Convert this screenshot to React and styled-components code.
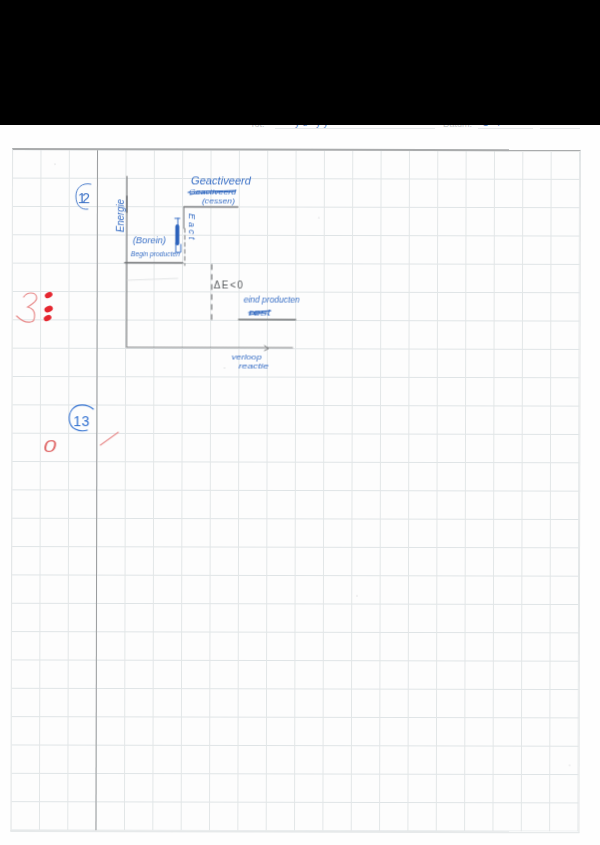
import styled, { createGlobalStyle } from "styled-components";

const GlobalStyle = createGlobalStyle`
  html, body {
    margin: 0;
    padding: 0;
    background: #fff;
  }
`;

const Page = styled.div`
  width: 600px;
  height: 845px;
  overflow: hidden;
  background: #fefefe;
`;

const BlackBar = styled.div`
  height: 125px;
  background: #000;
`;

// the form header of the scan, almost entirely hidden under the black bar
const HeaderStrip = styled.div`
  height: 4px;
  overflow: hidden;
  display: flex;
  align-items: flex-end;
  padding-left: 250px;
  font-family: "Liberation Sans", sans-serif;
  font-size: 9px;
  line-height: 9px;
  color: #c4c7c9;
`;

const HeaderLabel = styled.span`
  width: ${(p) => p.$width}px;
`;

const HeaderLine = styled.span`
  box-sizing: border-box;
  width: ${(p) => p.$width}px;
  margin-right: ${(p) => p.$gap || 0}px;
  padding-left: ${(p) => p.$indent || 0}px;
  border-bottom: 1px solid #e6e9eb;
  color: #5b86c9;
  letter-spacing: 3px;
`;

const Sheet = styled.div`
  position: relative;
  box-sizing: border-box;
  width: 569px;
  height: 684px;
  margin: 19px 0 0 12px;
  transform: rotate(0.13deg);
  transform-origin: top left;
  border-top: 2px solid #a9abac;
  border-left: 1px solid #e3e6e7;
  border-right: 1px solid #e3e6e7;
  border-bottom: 2px solid #e6e9ea;
  background-color: #fdfdfd;
  background-image:
    linear-gradient(to right, #e2e6e7 1.4px, transparent 1.4px),
    linear-gradient(to bottom, #dfe4e6 1.2px, transparent 1.2px);
  background-size: 28.35px 28.35px;
  background-position: 27.5px 0, 0 27.6px;
`;

const MarginLine = styled.div`
  position: absolute;
  top: 0;
  bottom: 0;
  left: 84px;
  width: 1px;
  background: #9a9c9e;
`;

const Ink = styled.svg`
  position: absolute;
  left: -1px;
  top: 0;
  width: 568px;
  height: 682px;
  overflow: visible;
  filter: blur(0.3px);
`;

const Note = styled.text`
  font-family: "Liberation Sans", sans-serif;
  font-style: ${(p) => (p.$upright ? "normal" : "italic")};
  font-size: ${(p) => p.$size || 9}px;
  fill: ${(p) => p.$color || "#3a70c6"};
`;

const axisLines = [
  { d: "M127 176V347H293", w: 1.2, c: "#808284" },
  { d: "M127 196V212", w: 1.6, c: "#77797b" },
  { d: "M265 345l4 3-4 2", w: 1, c: "#77797b" },
  { d: "M125 262.5H183", w: 1.3, c: "#6f7173" },
  { d: "M184 206.5H238", w: 1.3, c: "#7c7e80" },
  { d: "M184 207V228", w: 1.2, c: "#85878a" },
  { d: "M128 280l50-2", w: 1, c: "#e2e4e5" },
  { d: "M239 319H296", w: 1.3, c: "#6f7173" },
];

const dashedLines = [
  { d: "M185 228V265", dash: "4 3", c: "#8c8e90" },
  { d: "M212 264V321", dash: "5 5", c: "#6f7173" },
];

const notes = [
  { x: 191, y: 184, text: "Geactiveerd", len: 60, size: 10 },
  { x: 189, y: 194, text: "Geactiveerd", len: 47, size: 8 },
  { x: 202, y: 203, text: "(cessen)", len: 33, size: 7 },
  { x: 133, y: 243, text: "(Borein)", len: 33, size: 9 },
  { x: 131, y: 256, text: "Begin producten", len: 49, size: 8 },
  { x: 244, y: 302, text: "eind producten", len: 56, size: 9 },
  { x: 249, y: 315, text: "rest", len: 22, size: 9 },
  { x: 232, y: 359, text: "verloop", len: 30, size: 7 },
  { x: 239, y: 368, text: "reactie", len: 30, size: 7 },
];

const specks = [
  [225, 367.5],
  [319, 217],
  [55, 164],
  [358, 595],
  [571, 764],
];

const App = () => (
  <Page>
    <GlobalStyle />
    <BlackBar />
    <HeaderStrip>
      <HeaderLabel $width={25}>Tot:</HeaderLabel>
      <HeaderLine $width={160} $gap={8} $indent={20}>
        ye yy
      </HeaderLine>
      <HeaderLabel $width={35}>Datum:</HeaderLabel>
      <HeaderLine $width={55} $gap={7} $indent={5}>
        1 7
      </HeaderLine>
      <HeaderLine $width={40} />
    </HeaderStrip>
    <Sheet>
      <MarginLine />
      <Ink viewBox="12 150 568 682" fill="none" strokeLinecap="round">
        {axisLines.map((l) => (
          <path key={l.d} d={l.d} stroke={l.c} strokeWidth={l.w} />
        ))}
        {dashedLines.map((l) => (
          <path key={l.d} d={l.d} stroke={l.c} strokeWidth="1.2" strokeDasharray={l.dash} />
        ))}

        {notes.map((n) => (
          <Note
            key={n.x + n.text}
            x={n.x}
            y={n.y}
            $size={n.size}
            textLength={n.len}
            lengthAdjust="spacingAndGlyphs"
          >
            {n.text}
          </Note>
        ))}
        <Note
          x={0}
          y={0}
          $size={10}
          textLength={33}
          lengthAdjust="spacingAndGlyphs"
          transform="translate(124 232) rotate(-90)"
        >
          Energie
        </Note>
        <Note
          x={0}
          y={0}
          $size={9}
          textLength={26}
          lengthAdjust="spacing"
          transform="translate(189 213) rotate(90)"
        >
          Eact
        </Note>
        <Note x={214} y={288} $size={10} $upright $color="#55585b" textLength={29} lengthAdjust="spacing">
          ΔE&lt;0
        </Note>

        {/* crossed out words */}
        <path d="M188 192c14-2 32-1 48-2M190 194c12-2 30-2 45-3" stroke="#2f66bd" strokeWidth="1" />
        <path d="M249 312l22-2M250 314l17-2" stroke="#2f66bd" strokeWidth="1.2" />
        <path d="M177.5 226v17" stroke="#2c62bb" strokeWidth="4" />
        <path
          d="M175 218h5M178 218v8M176 243v9h5v-8"
          stroke="#3a70c6"
          strokeWidth="1"
        />

        {/* question numbers */}
        <path d="M91 184c-9-2-15 4-15 12 0 9 5 14 12 13" stroke="#3a70c6" strokeWidth="0.9" />
        <Note x={78} y={203} $size={14} $upright textLength={12} lengthAdjust="spacing">
          12
        </Note>
        <path
          d="M94 409c-6-5-16-6-21 0-5 6-4 17 3 20 4 2 9 2 12 1"
          stroke="#2f6fd0"
          strokeWidth="1.1"
        />
        <Note x={74} y={426} $size={14} $upright $color="#2f6fd0" textLength={16} lengthAdjust="spacing">
          13
        </Note>

        {/* marks in red */}
        <path
          d="M24 297c2-3 5-4 7-4 4 0 6 2 6 5 0 4-6 7-9 9 4 1 7 4 7 8 0 4-1 7-4 7-5 1-10-2-14-6"
          stroke="#e88a8a"
          strokeWidth="1.2"
        />
        <ellipse cx="49" cy="295" rx="4" ry="2.8" fill="#e5262f" transform="rotate(-25 49 295)" />
        <ellipse cx="49" cy="309" rx="4.4" ry="3" fill="#e5262f" transform="rotate(-25 49 309)" />
        <ellipse cx="48" cy="318" rx="4" ry="2.8" fill="#e5262f" transform="rotate(-25 48 318)" />
        <Note x={44} y={452} $size={16} $color="#e06a6a" textLength={13} lengthAdjust="spacingAndGlyphs">
          0
        </Note>
        <path d="M101 445l18-13" stroke="#e88a8a" strokeWidth="1.1" />

        {specks.map(([x, y]) => (
          <circle key={x} cx={x} cy={y} r="0.6" fill="#c5c8ca" />
        ))}
      </Ink>
    </Sheet>
  </Page>
);

export default App;
